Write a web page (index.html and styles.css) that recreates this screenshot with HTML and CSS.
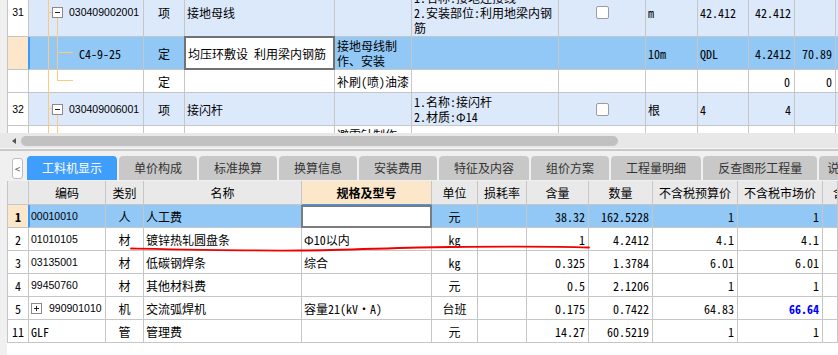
FILE: index.html
```html
<!DOCTYPE html>
<html>
<head>
<meta charset="utf-8">
<link rel="stylesheet" href="styles.css">
</head>
<body>
<div class="top-view">
  <div class="tgrid">
    <div class="trow h48 lb">
      <div class="c rn t">31</div>
      <div class="c tree"><svg class="tb" width="11" height="11" viewBox="0 0 11 11"><rect x="0.5" y="0.5" width="10" height="10" fill="#fff" stroke="#8a8a8a"/><path d="M3 5.5H8" stroke="#222"/></svg><span class="t code">030409002001</span></div>
      <div class="c ctr">项</div>
      <div class="c">接地母线</div>
      <div class="c"></div>
      <div class="c ml">1.名称:接地连接线<br>2.安装部位:利用地梁内钢<br>筋</div>
      <div class="c ctr"><span class="chk"></span></div>
      <div class="c">m</div>
      <div class="c">42.412</div>
      <div class="c n">42.412</div>
      <div class="c"></div>
      <div class="c"></div>
    </div>
    <div class="trow h33 sel">
      <div class="c rn"></div>
      <div class="c tree c4">C4-9-25</div>
      <div class="c ctr">定</div>
      <div class="c ed">均压环敷设 利用梁内钢筋</div>
      <div class="c ml">接地母线制<br>作、安装</div>
      <div class="c"></div>
      <div class="c"></div>
      <div class="c">10m</div>
      <div class="c">QDL</div>
      <div class="c n">4.2412</div>
      <div class="c n n3">70.89</div>
      <div class="c"></div>
    </div>
    <div class="trow h23">
      <div class="c rn"></div>
      <div class="c tree"></div>
      <div class="c ctr">定</div>
      <div class="c"></div>
      <div class="c">补刷(喷)油漆</div>
      <div class="c"></div>
      <div class="c"></div>
      <div class="c"></div>
      <div class="c"></div>
      <div class="c n n4">0</div>
      <div class="c n n3">0</div>
      <div class="c"></div>
    </div>
    <div class="trow h33 lb">
      <div class="c rn t">32</div>
      <div class="c tree"><svg class="tb" width="11" height="11" viewBox="0 0 11 11"><rect x="0.5" y="0.5" width="10" height="10" fill="#fff" stroke="#8a8a8a"/><path d="M3 5.5H8" stroke="#222"/></svg><span class="t code">030409006001</span></div>
      <div class="c ctr">项</div>
      <div class="c">接闪杆</div>
      <div class="c"></div>
      <div class="c ml">1.名称:接闪杆<br>2.材质:Φ14</div>
      <div class="c ctr"><span class="chk"></span></div>
      <div class="c">根</div>
      <div class="c">4</div>
      <div class="c n">4</div>
      <div class="c"></div>
      <div class="c"></div>
    </div>
    <div class="trow h33">
      <div class="c rn"></div>
      <div class="c tree"></div>
      <div class="c ctr"></div>
      <div class="c"></div>
      <div class="c ml">避雷针制作<br>、安装</div>
      <div class="c"></div>
      <div class="c"></div>
      <div class="c"></div>
      <div class="c"></div>
      <div class="c"></div>
      <div class="c"></div>
      <div class="c"></div>
    </div>
  </div>
  <svg class="tree-lines" width="838" height="133" viewBox="0 0 838 133">
    <path d="M48.5 0V133M48 12.5H52M57.5 18V81M57 52.5H73M57 80.5H73M48 108.5H52M57.5 115V133" stroke="#ffc87c" stroke-width="1" fill="none" shape-rendering="crispEdges"/>
  </svg>
</div>
<div class="hscroll"><span class="arrow"></span><span class="thumb"></span></div>
<div class="sep"></div>
<div class="tabs">
  <span class="tab-btn">&lt;</span>
  <span class="tab active">工料机显示</span>
  <span class="tab">单价构成</span>
  <span class="tab">标准换算</span>
  <span class="tab">换算信息</span>
  <span class="tab">安装费用</span>
  <span class="tab">特征及内容</span>
  <span class="tab">组价方案</span>
  <span class="tab">工程量明细</span>
  <span class="tab">反查图形工程量</span>
  <span class="tab last">说明信息</span>
</div>
<div class="bwrap">
  <div class="bgrid">
    <div class="brow bhead">
      <div class="c"></div>
      <div class="c">编码</div>
      <div class="c">类别</div>
      <div class="c">名称</div>
      <div class="c spec">规格及型号</div>
      <div class="c">单位</div>
      <div class="c">损耗率</div>
      <div class="c">含量</div>
      <div class="c">数量</div>
      <div class="c">不含税预算价</div>
      <div class="c">不含税市场价</div>
      <div class="c part">含税市场价</div>
    </div>
    <div class="brow sel">
      <div class="c rn b">1</div>
      <div class="c t first">00010010</div>
      <div class="c ctr">人</div>
      <div class="c">人工费</div>
      <div class="c ed2"></div>
      <div class="c ctr">元</div>
      <div class="c"></div>
      <div class="c n">38.32</div>
      <div class="c n">162.5228</div>
      <div class="c n">1</div>
      <div class="c n">1</div>
      <div class="c"></div>
    </div>
    <div class="brow">
      <div class="c rn">2</div>
      <div class="c t">01010105</div>
      <div class="c ctr">材</div>
      <div class="c">镀锌热轧圆盘条</div>
      <div class="c">Φ10以内</div>
      <div class="c ctr">kg</div>
      <div class="c"></div>
      <div class="c n">1</div>
      <div class="c n">4.2412</div>
      <div class="c n">4.1</div>
      <div class="c n">4.1</div>
      <div class="c"></div>
    </div>
    <div class="brow">
      <div class="c rn">3</div>
      <div class="c t">03135001</div>
      <div class="c ctr">材</div>
      <div class="c">低碳钢焊条</div>
      <div class="c">综合</div>
      <div class="c ctr">kg</div>
      <div class="c"></div>
      <div class="c n">0.325</div>
      <div class="c n">1.3784</div>
      <div class="c n">6.01</div>
      <div class="c n">6.01</div>
      <div class="c"></div>
    </div>
    <div class="brow">
      <div class="c rn">4</div>
      <div class="c t">99450760</div>
      <div class="c ctr">材</div>
      <div class="c">其他材料费</div>
      <div class="c"></div>
      <div class="c ctr">元</div>
      <div class="c"></div>
      <div class="c n">0.5</div>
      <div class="c n">2.1206</div>
      <div class="c n">1</div>
      <div class="c n">1</div>
      <div class="c"></div>
    </div>
    <div class="brow">
      <div class="c rn">5</div>
      <div class="c t"><svg class="pb" width="11" height="11" viewBox="0 0 11 11"><rect x="0.5" y="0.5" width="10" height="10" fill="#fff" stroke="#8a8a8a"/><path d="M3 5.5H8M5.5 3V8" stroke="#222"/></svg>990901010</div>
      <div class="c ctr">机</div>
      <div class="c">交流弧焊机</div>
      <div class="c">容量21(kV·A)</div>
      <div class="c ctr">台班</div>
      <div class="c"></div>
      <div class="c n">0.175</div>
      <div class="c n">0.7422</div>
      <div class="c n">64.83</div>
      <div class="c n hi">66.64</div>
      <div class="c"></div>
    </div>
    <div class="brow">
      <div class="c rn">11</div>
      <div class="c">GLF</div>
      <div class="c ctr">管</div>
      <div class="c">管理费</div>
      <div class="c"></div>
      <div class="c ctr">元</div>
      <div class="c"></div>
      <div class="c n">14.27</div>
      <div class="c n">60.5219</div>
      <div class="c n">1</div>
      <div class="c n">1</div>
      <div class="c"></div>
    </div>
  </div>
</div>
<svg class="annot" width="838" height="355" viewBox="0 0 838 355">
  <path d="M131 248.5C180 249.5 250 251 300 250.5S400 247.5 450 247S560 246.5 589 247.5" stroke="#f00000" stroke-width="1.8" fill="none" stroke-linecap="round"/>
</svg>
</body>
</html>
```

FILE: styles.css
```css
* { box-sizing: border-box; margin: 0; padding: 0; }
html, body { width: 838px; height: 355px; overflow: hidden; }
body {
  position: relative;
  background: #f0f0f0;
  font-family: "Noto Sans Mono CJK SC", "Noto Sans CJK SC", sans-serif;
  font-size: 12px;
  color: #000;
}

/* ---- top grid ---- */
.top-view { position: relative; height: 133px; overflow: hidden; padding-left: 7px; }
.tgrid { margin-top: -11px; border-left: 1px solid #c6c6c6; background: #fff; }
.trow {
  display: grid;
  grid-template-columns: 21px 115px 41px 150px 77px 147px 87px 52px 51px 46px 41px 1fr;
}
.h48 { height: 48px; }
.h33 { height: 33px; }
.h23 { height: 23px; }
.c {
  display: flex;
  align-items: center;
  padding: 0 2px;
  border-right: 1px solid #c6c6c6;
  border-bottom: 1px solid #c6c6c6;
  white-space: nowrap;
  overflow: hidden;
  line-height: 15px;
}
.ctr { justify-content: center; }
.n { justify-content: flex-end; padding-right: 3px; }
.n3 { padding-right: 3px; }
.n4 { padding-right: 4px; }
.t { font-family: "Liberation Sans", sans-serif; font-size: 10.5px; }
.rn { justify-content: center; padding: 0; }
.lb .c { background: #dce9fb; }
.lb .rn { background: #fff; }
.sel .c { background: #91c8f6; }
.sel .rn { background: #fde7ca; border-right-color: #3d9bfb; }
.tree { padding-left: 23px; }
.tree .code { margin-left: 6px; }
.c4 { padding-left: 50px; box-shadow: inset 1px 0 #3d9bfb; }
.tb { flex: none; }
.ml { align-items: center; }
.ed {
  margin: -1px 0 0 -1px;
  border: 2px solid #717171;
  padding-left: 2px;
}
.sel .ed { background: #fff; }
.chk {
  width: 13px; height: 13px;
  border: 1px solid #9c9c9c;
  border-radius: 2px;
  background: #fff;
}
.tree-lines { position: absolute; left: 0; top: 0; pointer-events: none; }

/* ---- scroll bar ---- */
.hscroll {
  height: 15px;
  background: #e8e8e8;
  display: flex;
  align-items: center;
  padding-left: 12px;
}
.arrow {
  width: 0; height: 0;
  border-top: 3px solid transparent;
  border-bottom: 3px solid transparent;
  border-right: 4px solid #555;
}
.thumb {
  margin-left: 5px;
  width: 597px;
  height: 10px;
  border-radius: 5px;
  background: #c1c1c1;
}
.sep { height: 3px; border-top: 1px solid #f6f6f6; background: #c9c9c9; }

/* ---- tabs ---- */
.tabs {
  height: 30px;
  display: flex;
  align-items: flex-start;
  padding: 5px 0 0 12px;
  overflow: hidden;
  white-space: nowrap;
  font-family: "Noto Sans CJK SC", sans-serif;
}
.tab-btn {
  flex: none;
  width: 11px; height: 21px;
  margin: 2px 4px 0 0;
  border: 1px solid #bdbdbd;
  border-radius: 3px;
  background: #fff;
  color: #555;
  font-size: 10px;
  line-height: 19px;
  text-align: center;
}
.tab {
  flex: none;
  height: 24px;
  line-height: 24px;
  padding: 0 15px;
  margin-right: 2px;
  background: #c8c8c8;
  border-radius: 4px 4px 0 0;
  color: #333;
  font-size: 12px;
}
.tab.active { background: #3f9dfc; color: #fff; }
.tab.last { padding-left: 8px; }

/* ---- bottom grid ---- */
.bwrap { margin-left: 7px; background: #fff; height: 174px; }
.bgrid { border-left: 1px solid #c6c6c6; }
.brow {
  display: grid;
  grid-template-columns: 21px 77px 38px 158px 130px 46px 49px 62px 64px 85px 85px 1fr;
  height: 23px;
}
.bhead { height: 24px; }
.bhead .c { background: #e9e9e9; justify-content: center; }
.bhead .spec { background: #fde7ca; font-weight: bold; border-bottom-color: #3d9bfb; }
.bhead .part { justify-content: flex-start; padding-left: 10px; }
.brow .c { background: #fff; }
.brow.bhead .c { background: #e9e9e9; }
.brow.bhead .spec { background: #fde7ca; }
.brow.sel .c { background: #91c8f6; }
.brow.sel .rn { background: #fde7ca; }
.brow.sel .first { box-shadow: inset 1px 0 #3d9bfb; }
.brow.sel .ed2 { background: #fff; margin-left: -1px; border: 2px solid #7c7c7c; }
.b { font-weight: bold; }
.pb { flex: none; margin-right: 7px; }
.hi { color: #0000ff; font-weight: bold; }

.annot { position: absolute; left: 0; top: 0; pointer-events: none; }
```
